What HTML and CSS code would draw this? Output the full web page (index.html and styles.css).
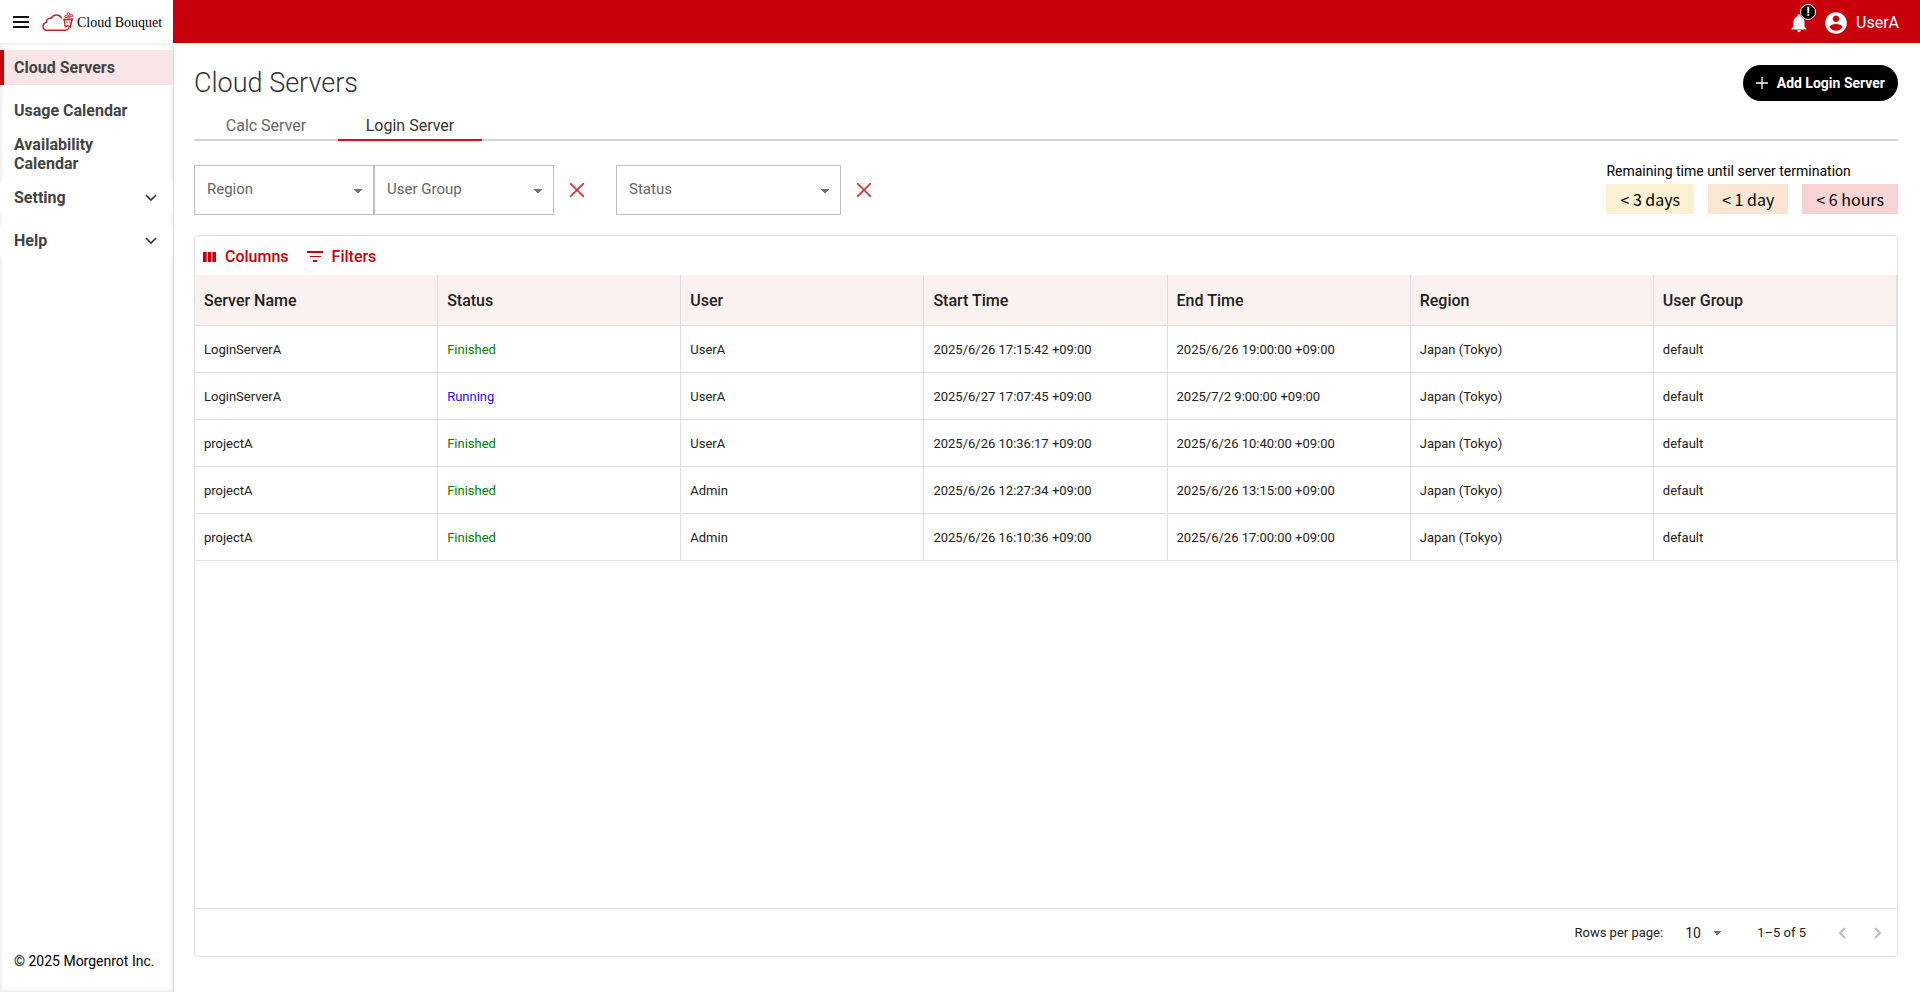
FILE: index.html
```html
<!DOCTYPE html>
<html lang="en">
<head>
  <meta charset="UTF-8">
  <title>Cloud Bouquet</title>
  <link rel="stylesheet" href="styles.css">
</head>
<body>

<header class="topbar">
  <div class="brand">
    <button type="button" class="icon-btn" aria-label="Menu">
      <svg width="16" height="12" viewBox="0 0 16 12"><path d="M0 1h16M0 6h16M0 11h16" stroke="#111" stroke-width="2"/></svg>
    </button>
    <a href="#" class="logo">
      <svg width="32" height="20" viewBox="0 0 32 20" fill="none" stroke="#c9222e">
        <path d="M19.500 6C17.500 2.200 11.500 1.800 9.200 6.200C6.500 5.800 4.500 7.500 4.500 10.200C1.800 11 1 13 1 14.800C1.300 17.300 3.200 18.300 5.500 18.300H23.500C25.300 18.200 26.300 17.500 26.800 16" stroke-width="1.500" stroke-linecap="round"/>
        <path d="M22 7L23.300 14.800L26 13.500L28.300 15L30.300 6.500" stroke-width="1.400"/>
        <path d="M21.500 7.500H31" stroke-width="1.800"/>
        <path d="M25 9.500V11.500M28 9.500V11.500" stroke-width="1"/>
        <circle cx="24" cy="4.500" r="1.200"/>
        <circle cx="26.500" cy="2" r="1.300"/>
        <circle cx="29.500" cy="3.500" r="1.200"/>
        <circle cx="27" cy="5.200" r="1"/>
      </svg>
      <span>Cloud Bouquet</span>
    </a>
  </div>
  <div class="account">
    <button type="button" class="icon-btn bell" aria-label="Notifications">
      <svg width="22" height="22" viewBox="0 0 24 24" fill="#fff"><path d="M12 22c1.100 0 2-.9 2-2h-4c0 1.100.9 2 2 2zm6-6v-5c0-3.070-1.630-5.640-4.500-6.320V4c0-.83-.67-1.500-1.500-1.500s-1.500.67-1.500 1.500v.68C7.640 5.360 6 7.920 6 11v5l-2 2v1h16v-1l-2-2z"/></svg>
      <span class="badge">!</span>
    </button>
    <a href="#" class="user">
      <svg width="26" height="26" viewBox="0 0 24 24" fill="#fff"><path d="M12 2C6.480 2 2 6.480 2 12s4.480 10 10 10 10-4.480 10-10S17.520 2 12 2zm0 3c1.660 0 3 1.340 3 3s-1.340 3-3 3-3-1.340-3-3 1.340-3 3-3zm0 14.200c-2.500 0-4.710-1.280-6-3.220.03-1.990 4-3.080 6-3.080 1.990 0 5.970 1.090 6 3.080-1.290 1.940-3.500 3.220-6 3.220z"/></svg>
      <span>UserA</span>
    </a>
  </div>
</header>

<div class="layout">
  <aside class="sidebar">
    <nav class="menu">
      <a href="#" class="active">Cloud Servers</a>
      <a href="#">Usage Calendar</a>
      <a href="#" class="two-lines">Availability Calendar</a>
      <button type="button">Setting
        <svg width="12" height="8" viewBox="0 0 12 8"><path d="M1 1l5 5 5-5" fill="none" stroke="#333" stroke-width="1.600"/></svg>
      </button>
      <button type="button">Help
        <svg width="12" height="8" viewBox="0 0 12 8"><path d="M1 1l5 5 5-5" fill="none" stroke="#333" stroke-width="1.600"/></svg>
      </button>
    </nav>
    <p class="copyright">© 2025 Morgenrot Inc.</p>
  </aside>

  <main class="content">
    <div class="title-row">
      <h1>Cloud Servers</h1>
      <button type="button" class="add-btn">
        <svg width="12" height="12" viewBox="0 0 12 12"><path d="M6 0v12M0 6h12" stroke="#fff" stroke-width="1.300"/></svg>
        Add Login Server
      </button>
    </div>

    <nav class="tabs">
      <a href="#">Calc Server</a>
      <a href="#" class="active">Login Server</a>
    </nav>

    <div class="filter-row">
      <div class="filters">
        <select class="filter" aria-label="Region"><option>Region</option></select>
        <select class="filter" aria-label="User Group"><option>User Group</option></select>
        <button type="button" class="clear" aria-label="Clear region and user group">
          <svg width="14" height="14" viewBox="0 0 14 14"><path d="M0 0l14 14M14 0L0 14" stroke="#d32f2f" stroke-width="1.600"/></svg>
        </button>
        <select class="filter status-filter" aria-label="Status"><option>Status</option></select>
        <button type="button" class="clear" aria-label="Clear status">
          <svg width="14" height="14" viewBox="0 0 14 14"><path d="M0 0l14 14M14 0L0 14" stroke="#d32f2f" stroke-width="1.600"/></svg>
        </button>
      </div>
      <div class="legend">
        <p>Remaining time until server termination</p>
        <div class="chips">
          <span class="chip yellow">&lt; 3 days</span>
          <span class="chip orange">&lt; 1 day</span>
          <span class="chip red">&lt; 6 hours</span>
        </div>
      </div>
    </div>

    <section class="grid">
      <div class="toolbar">
        <button type="button">
          <svg width="13" height="10" viewBox="0 0 13 10" fill="#c7000b"><path d="M0 0h3.700v10H0zM4.700 0h3.600v10H4.700zM9.300 0H13v10H9.300z"/></svg>
          Columns
        </button>
        <button type="button">
          <svg width="16" height="11" viewBox="0 0 16 11" fill="#c7000b"><path d="M0 0h16v2H0zM3 5h11v1H3zM6 9h4v2H6z"/></svg>
          Filters
        </button>
      </div>
      <table>
        <thead>
          <tr><th>Server Name</th><th>Status</th><th>User</th><th>Start Time</th><th>End Time</th><th>Region</th><th>User Group</th></tr>
        </thead>
        <tbody>
          <tr><td>LoginServerA</td><td class="finished">Finished</td><td>UserA</td><td>2025/6/26 17:15:42 +09:00</td><td>2025/6/26 19:00:00 +09:00</td><td>Japan (Tokyo)</td><td>default</td></tr>
          <tr><td>LoginServerA</td><td class="running">Running</td><td>UserA</td><td>2025/6/27 17:07:45 +09:00</td><td>2025/7/2 9:00:00 +09:00</td><td>Japan (Tokyo)</td><td>default</td></tr>
          <tr><td>projectA</td><td class="finished">Finished</td><td>UserA</td><td>2025/6/26 10:36:17 +09:00</td><td>2025/6/26 10:40:00 +09:00</td><td>Japan (Tokyo)</td><td>default</td></tr>
          <tr><td>projectA</td><td class="finished">Finished</td><td>Admin</td><td>2025/6/26 12:27:34 +09:00</td><td>2025/6/26 13:15:00 +09:00</td><td>Japan (Tokyo)</td><td>default</td></tr>
          <tr><td>projectA</td><td class="finished">Finished</td><td>Admin</td><td>2025/6/26 16:10:36 +09:00</td><td>2025/6/26 17:00:00 +09:00</td><td>Japan (Tokyo)</td><td>default</td></tr>
        </tbody>
      </table>
      <div class="pager">
        <label for="rows">Rows per page:</label>
        <select id="rows" class="rows"><option>10</option></select>
        <span class="range">1–5 of 5</span>
        <button type="button" aria-label="Previous page" disabled>
          <svg width="8" height="12" viewBox="0 0 8 12"><path d="M7 1L2 6l5 5" fill="none" stroke="#bbb" stroke-width="1.800"/></svg>
        </button>
        <button type="button" aria-label="Next page" disabled>
          <svg width="8" height="12" viewBox="0 0 8 12"><path d="M1 1l5 5-5 5" fill="none" stroke="#bbb" stroke-width="1.800"/></svg>
        </button>
      </div>
    </section>
  </main>
</div>

</body>
</html>
```

FILE: styles.css
```css
* {
  box-sizing: border-box;
}
body {
  margin: 0;
  min-height: 100vh;
  display: flex;
  flex-direction: column;
  background: #fff;
  color: #000;
  font-family: Roboto, "Noto Sans CJK JP", sans-serif;
  font-size: 16px;
}
a {
  color: inherit;
  text-decoration: none;
}
button {
  border: none;
  background: none;
  padding: 0;
  color: inherit;
  font: inherit;
  cursor: pointer;
}
svg {
  display: block;
  flex: none;
}

/* Top bar */
.topbar {
  display: flex;
  height: 43px;
  background: #c7000b;
}
.brand {
  width: 173px;
  display: flex;
  align-items: center;
  gap: 13px;
  padding-left: 13px;
  background: #fff;
}
.logo {
  display: flex;
  align-items: center;
  gap: 3px;
  font-family: "Liberation Serif", serif;
  font-size: 14px;
  white-space: nowrap;
}
.logo span {
  padding-top: 2px;
}
.account {
  flex: 1;
  display: flex;
  justify-content: flex-end;
  align-items: center;
  gap: 13px;
  padding: 2px 21px 0 0;
  color: #fff;
}
.bell {
  position: relative;
}
.badge {
  position: absolute;
  top: -8px;
  right: -6px;
  width: 16px;
  height: 16px;
  border: 1px solid #fff;
  border-radius: 50%;
  background: #000;
  font-size: 12px;
  font-weight: 700;
  line-height: 14px;
}
.user {
  display: flex;
  align-items: center;
  gap: 7px;
}

/* Sidebar */
.layout {
  flex: 1;
  display: flex;
}
.sidebar {
  width: 174px;
  display: flex;
  flex-direction: column;
  justify-content: space-between;
  border-right: 1px solid #ddd;
  box-shadow: inset 0 0 5px #ddd;
}
.menu {
  display: flex;
  flex-direction: column;
  padding-top: 7px;
  font-weight: 700;
  color: #444;
}
.menu a,
.menu button {
  display: flex;
  justify-content: space-between;
  align-items: center;
  height: 35px;
  margin-bottom: 8px;
  padding: 0 16px 0 14px;
}
.menu button {
  height: 37px;
  margin-bottom: 6px;
  border-radius: 6px;
  background: #fff;
}
.menu .active {
  border-left: 4px solid #c7000b;
  padding-left: 10px;
  background: #f8e5e7;
}
.menu .two-lines {
  line-height: 19px;
}
.copyright {
  margin: 0;
  padding: 0 14px 22px;
  font-size: 14px;
  line-height: 18px;
  white-space: nowrap;
}

/* Content */
.content {
  flex: 1;
  display: flex;
  flex-direction: column;
  padding: 22px 22px 35px 20px;
}
.title-row {
  display: flex;
  justify-content: space-between;
  align-items: center;
}
h1 {
  margin: 0;
  color: #333;
  font-size: 27px;
  font-weight: 300;
  line-height: 34px;
}
.add-btn {
  display: flex;
  align-items: center;
  gap: 9px;
  height: 36px;
  padding: 0 13px;
  border-radius: 18px;
  background: #000;
  color: #fff;
  font-size: 14px;
  font-weight: 700;
}
.tabs {
  display: flex;
  margin-top: 8px;
  box-shadow: inset 0 -2px #d5d5d5;
}
.tabs a {
  width: 144px;
  height: 32px;
  border-bottom: 2px solid transparent;
  color: #666;
  line-height: 34px;
  text-align: center;
}
.tabs .active {
  border-color: #d3121f;
  color: #333;
}
.filter-row {
  display: flex;
  justify-content: space-between;
  align-items: flex-start;
  margin-top: 21px;
}
.filters {
  display: flex;
  align-items: center;
  margin-top: 3px;
}
/* Drop-downs with a small arrow drawn as a gradient */
.filter,
.rows {
  appearance: none;
  background-color: #fff;
  background-image: conic-gradient(from -45deg at 50% 100%, #707070 90deg, transparent 0);
  background-repeat: no-repeat;
  background-size: 8px 4px;
}
.filter {
  width: 180px;
  height: 50px;
  padding: 0 12px 3px;
  border: 1px solid #bfbfbf;
  border-radius: 0;
  background-position: right 11px top 23px;
  color: #666;
  font: inherit;
  font-size: 15px;
}
.status-filter {
  width: 225px;
  margin-left: 16px;
}
.clear {
  padding: 0 16px;
}
.legend p {
  margin: 0 0 4px;
  font-size: 14px;
  line-height: 18px;
}
.chips {
  display: flex;
  gap: 14px;
}
.chip {
  padding: 0 14px;
  font-family: "Noto Sans CJK JP", sans-serif;
  line-height: 30px;
}
.yellow {
  background: #fcf1d3;
}
.orange {
  background: #fae6d2;
}
.red {
  background: #f8d3d3;
}

/* Data grid */
.grid {
  flex: 1;
  display: flex;
  flex-direction: column;
  margin-top: 20px;
  border: 1px solid #e0e0e0;
  border-radius: 4px;
}
.toolbar {
  display: flex;
  gap: 18px;
  height: 39px;
  padding: 2px 8px 0;
  color: #c7000b;
  font-weight: 500;
}
.toolbar button {
  display: flex;
  align-items: center;
  gap: 9px;
}
table {
  width: 100%;
  table-layout: fixed;
  border-collapse: separate;
  border-spacing: 0;
}
th,
td {
  height: 47px;
  padding: 0 9px;
  border-right: 1px solid #e0e0e0;
  border-bottom: 1px solid #e0e0e0;
  color: #212121;
  font-size: 13px;
  text-align: left;
}
th {
  height: 51px;
  background: #fcf1f1;
  font-size: 16px;
  font-weight: 500;
}
.finished {
  color: green;
}
.running {
  color: #2a0cf0;
}
.pager {
  display: flex;
  justify-content: flex-end;
  align-items: center;
  height: 48px;
  margin-top: auto;
  padding-right: 15px;
  border-top: 1px solid #e0e0e0;
  color: #212121;
  font-size: 13px;
}
.rows {
  width: 44px;
  height: 24px;
  margin: 0 32px 0 18px;
  padding: 0 4px;
  border: none;
  background-position: right 4px center;
  color: inherit;
  font: inherit;
  font-size: 14px;
}
.range {
  margin-right: 32px;
}
.pager button + button {
  margin-left: 28px;
}
```
